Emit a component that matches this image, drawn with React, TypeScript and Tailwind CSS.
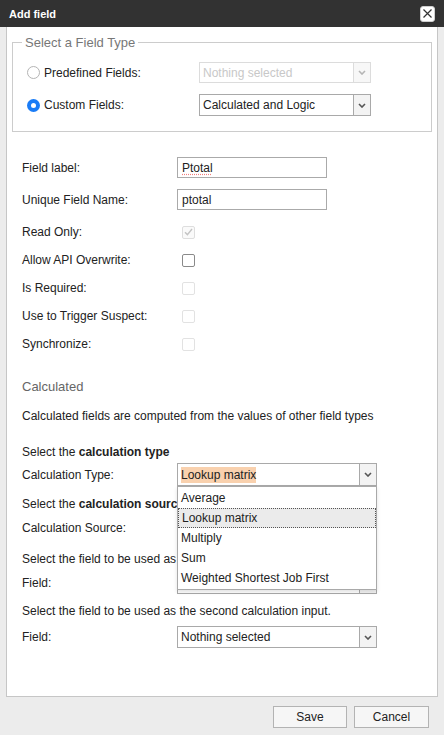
import React from "react";

function Chevron({ color = "#444" }: { color?: string }) {
  return (
    <svg width="8" height="5" viewBox="0 0 8 5" fill="none">
      <path d="M1 1L4 4L7 1" stroke={color} strokeWidth="1.6" />
    </svg>
  );
}

interface SelectBoxProps {
  value: string;
  width: string;
  height?: string;
  disabled?: boolean;
  highlight?: boolean;
  children?: React.ReactNode;
}

function SelectBox({ value, width, height = "h-[22px]", disabled, highlight, children }: SelectBoxProps) {
  return (
    <div
      className={`relative flex ${width} ${height} border bg-white ${
        disabled ? "border-[#dcdcdc]" : "border-[#a9a9a9]"
      }`}
    >
      <div className={`flex flex-1 items-center px-[3px] ${disabled ? "text-[#c8c8c8]" : "text-[#222]"}`}>
        {highlight ? <span className="bg-[#f9d1ae] leading-[16px]">{value}</span> : value}
      </div>
      <div
        className={`flex w-[17px] items-center justify-center border-l ${
          disabled ? "border-[#dcdcdc] bg-[#f7f7f7]" : "border-[#a9a9a9] bg-[#f3f3f3]"
        }`}
      >
        <Chevron color={disabled ? "#b5b5b5" : "#555"} />
      </div>
      {children}
    </div>
  );
}

function Radio({ checked }: { checked?: boolean }) {
  return checked ? (
    <span className="flex h-[13px] w-[13px] items-center justify-center rounded-full bg-[#1a7cf6]">
      <span className="h-[5px] w-[5px] rounded-full bg-white" />
    </span>
  ) : (
    <span className="h-[13px] w-[13px] rounded-full border border-[#b4b4b4] bg-white" />
  );
}

function Checkbox({ state }: { state: "checked-disabled" | "enabled" | "disabled" }) {
  if (state === "checked-disabled") {
    return (
      <span className="flex h-[13px] w-[13px] items-center justify-center rounded-[2px] border border-[#dedede] bg-[#fafafa]">
        <svg width="9" height="8" viewBox="0 0 9 8" fill="none">
          <path d="M1 4.2L3.4 6.6L8 1" stroke="#c4c4c4" strokeWidth="1.4" />
        </svg>
      </span>
    );
  }
  return (
    <span
      className={`h-[13px] w-[13px] rounded-[2px] border bg-white ${
        state === "enabled" ? "border-[#8a8a8a]" : "border-[#e2e2e2]"
      }`}
    />
  );
}

const checkRows: { label: string; state: "checked-disabled" | "enabled" | "disabled" }[] = [
  { label: "Read Only:", state: "checked-disabled" },
  { label: "Allow API Overwrite:", state: "enabled" },
  { label: "Is Required:", state: "disabled" },
  { label: "Use to Trigger Suspect:", state: "disabled" },
  { label: "Synchronize:", state: "disabled" },
];

const calcTypes = ["Average", "Lookup matrix", "Multiply", "Sum", "Weighted Shortest Job First"];

export default function App() {
  return (
    <div className="flex h-[735px] w-[444px] flex-col bg-[#ececec] font-['Liberation_Sans',Arial,sans-serif] text-[12px] leading-[14px] text-[#222]">
      {/* title bar */}
      <div className="flex h-[27px] shrink-0 items-center justify-between bg-[#323232] pl-[9px] pr-[9px]">
        <span className="text-[11px] font-bold text-white">Add field</span>
        <button className="flex h-[16px] w-[15px] items-center justify-center rounded-[3px] border border-[#cfcfcf] bg-white">
          <svg width="9" height="9" viewBox="0 0 9 9" fill="none">
            <path d="M0.5 0.5L8.5 8.5M8.5 0.5L0.5 8.5" stroke="#333" strokeWidth="1.2" />
          </svg>
        </button>
      </div>

      {/* content panel */}
      <div className="mx-[6px] flex-1 border-x border-b border-[#c6c6c6] bg-white px-[5px]">
        <fieldset className="mt-[8px] border border-[#cccccc] px-[9px] pb-[15px]">
          <legend className="px-[3px] text-[13px] leading-[15px] text-[#777]">Select a Field Type</legend>
          <div className="mt-[12px] flex h-[21px] items-center">
            <div className="flex w-[177px] items-center gap-[4px] pl-[5px]">
              <Radio />
              <span>Predefined Fields:</span>
            </div>
            <SelectBox value="Nothing selected" width="w-[172px]" height="h-[21px]" disabled />
          </div>
          <div className="mt-[11px] flex h-[22px] items-center">
            <div className="flex w-[177px] items-center gap-[4px] pl-[5px]">
              <Radio checked />
              <span>Custom Fields:</span>
            </div>
            <SelectBox value="Calculated and Logic" width="w-[172px]" />
          </div>
        </fieldset>

        <div className="pl-[10px]">
          <div className="mt-[25px] flex h-[21px] items-center">
            <span className="w-[155px]">Field label:</span>
            <div className="flex h-[21px] w-[150px] items-center border border-[#aaaaaa] px-[4px]">
              <span className="underline decoration-[#f08080] decoration-dotted underline-offset-[2px]">Ptotal</span>
            </div>
          </div>
          <div className="mt-[11px] flex h-[21px] items-center">
            <span className="w-[155px]">Unique Field Name:</span>
            <div className="flex h-[21px] w-[150px] items-center border border-[#aaaaaa] px-[4px]">ptotal</div>
          </div>

          <div className="mt-[8px]">
            {checkRows.map((row) => (
              <div key={row.label} className="flex h-[28px] items-center">
                <span className="w-[160px]">{row.label}</span>
                <Checkbox state={row.state} />
              </div>
            ))}
          </div>

          <div className="mt-[21px] text-[13px] leading-[15px] text-[#666]">Calculated</div>
          <div className="mt-[15px]">Calculated fields are computed from the values of other field types</div>

          {/* calculation type */}
          <div className="mt-[22px]">
            Select the <b>calculation type</b>
          </div>
          <div className="mt-[4px] flex h-[23px] items-center">
            <span className="w-[155px]">Calculation Type:</span>
            <SelectBox value="Lookup matrix" width="w-[200px]" height="h-[23px]" highlight>
              <div className="absolute top-[22px] -left-px z-10 w-[200px] border border-[#a9a9a9] bg-white py-px shadow-[0_2px_4px_rgba(0,0,0,0.12)]">
                {calcTypes.map((t) => (
                  <div
                    key={t}
                    className={`flex h-[20px] items-center px-[3px] ${
                      t === "Lookup matrix" ? "border border-dotted border-[#555] bg-[#ebebeb] px-[2px]" : ""
                    }`}
                  >
                    {t}
                  </div>
                ))}
              </div>
            </SelectBox>
          </div>

          {/* calculation source */}
          <div className="mt-[11px]">
            Select the <b>calculation source</b>
          </div>
          <div className="mt-[6px] flex h-[22px] items-center">
            <span className="w-[155px]">Calculation Source:</span>
            <SelectBox value="Nothing selected" width="w-[200px]" />
          </div>

          {/* first input */}
          <div className="mt-[13px]">Select the field to be used as the first calculation input.</div>
          <div className="mt-[6px] flex h-[22px] items-center">
            <span className="w-[155px]">Field:</span>
            <SelectBox value="Nothing selected" width="w-[200px]" />
          </div>

          {/* second input */}
          <div className="mt-[10px]">Select the field to be used as the second calculation input.</div>
          <div className="mt-[8px] flex h-[22px] items-center">
            <span className="w-[155px]">Field:</span>
            <SelectBox value="Nothing selected" width="w-[200px]" />
          </div>
        </div>
      </div>

      {/* footer */}
      <div className="flex h-[38px] shrink-0 items-start justify-end gap-[7px] pt-[9px] pr-[15px]">
        <button className="h-[22px] w-[74px] border border-[#b3b3b3] bg-[#f6f6f6] text-[12px] text-[#222]">Save</button>
        <button className="h-[22px] w-[75px] border border-[#b3b3b3] bg-[#f6f6f6] text-[12px] text-[#222]">Cancel</button>
      </div>
    </div>
  );
}
